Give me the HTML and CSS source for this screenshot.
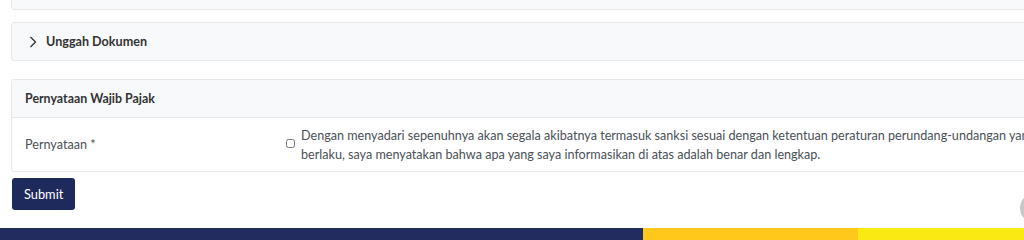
FILE: index.html
```html
<!DOCTYPE html>
<html lang="id">
<head>
<meta charset="UTF-8">
<meta name="viewport" content="width=device-width, initial-scale=1.0">
<title>Formulir Wajib Pajak</title>
<link rel="stylesheet" href="styles.css">
</head>
<body>

<div class="page">

  <!-- previous section, scrolled mostly out of view -->
  <div class="card card-prev"></div>

  <div class="card collapse-head">
    <svg class="chev" width="10" height="14" viewBox="0 0 10 14">
      <path d="M2.5 2 L7.5 7 L2.5 12" fill="none" stroke="#333" stroke-width="1.3"/>
    </svg>
    <span>Unggah Dokumen</span>
  </div>

  <div class="card statement">
    <div class="card-header">Pernyataan Wajib Pajak</div>
    <div class="form-row">
      <div class="form-label">Pernyataan *</div>
      <label class="check">
        <input type="checkbox">
        <span>Dengan menyadari sepenuhnya akan segala akibatnya termasuk sanksi sesuai dengan ketentuan peraturan perundang-undangan yang berlaku, saya menyatakan bahwa apa yang saya informasikan di atas adalah benar dan lengkap.</span>
      </label>
    </div>
  </div>

  <button class="btn-submit" type="button">Submit</button>

</div>

<div class="footer-bar">
  <div class="bar-navy"></div>
  <div class="bar-orange"></div>
  <div class="bar-yellow"></div>
</div>

<div class="float-btn"></div>

</body>
</html>
```

FILE: styles.css
```css
html, body {
  margin: 0;
  overflow: hidden;
}

body {
  font-family: Lato, "Open Sans", sans-serif;
  font-size: 12.6px;
  color: #495057;
  background: #fff;
  position: relative;
  height: 240px;
}

.page {
  width: 1120px;
  padding-left: 11px;
}

.card {
  background: #f8f9fb;
  border: 1px solid #e6e8ec;
  border-radius: 3px;
  box-sizing: border-box;
}

.card-prev {
  margin-top: -20px;
  height: 30px;
}

.collapse-head {
  margin-top: 12px;
  height: 39px;
  display: flex;
  align-items: center;
  padding-left: 16px;
  gap: 8px;
  font-weight: 700;
  color: #333;
}

.chev {
  display: block;
}

.statement {
  margin-top: 18px;
  background: #fff;
}

.card-header {
  background: #f8f9fb;
  border-bottom: 1px solid #e6e8ec;
  height: 38px;
  box-sizing: border-box;
  display: flex;
  align-items: center;
  padding-left: 13px;
  font-size: 12.4px;
  font-weight: 700;
  color: #333;
}

.form-row {
  display: flex;
  align-items: center;
  height: 53px;
  padding-left: 13px;
}

.form-label {
  width: 261px;
  flex-shrink: 0;
}

.check {
  display: flex;
  align-items: center;
  gap: 6px;
  line-height: 19px;
  width: 760px;
}

.check input {
  margin: 0;
  width: 9px;
  height: 9px;
  flex-shrink: 0;
  margin-top: -2px;
}

.btn-submit {
  display: block;
  margin-top: 6px;
  margin-left: 1px;
  height: 32px;
  padding: 0 12px;
  border: none;
  border-radius: 3px;
  background: #1f2a5c;
  color: #fff;
  font-family: inherit;
  font-size: 12.8px;
}

.footer-bar {
  display: flex;
  margin-top: 18px;
  height: 12px;
}

.bar-navy {
  width: 643px;
  background: #232c5e;
}

.bar-orange {
  width: 215px;
  background: #ffc81a;
}

.bar-yellow {
  flex: 1;
  background: #fbe914;
}

.float-btn {
  position: absolute;
  left: 1020px;
  top: 193px;
  width: 30px;
  height: 30px;
  border-radius: 50%;
  background: #c8c8c8;
}
```
